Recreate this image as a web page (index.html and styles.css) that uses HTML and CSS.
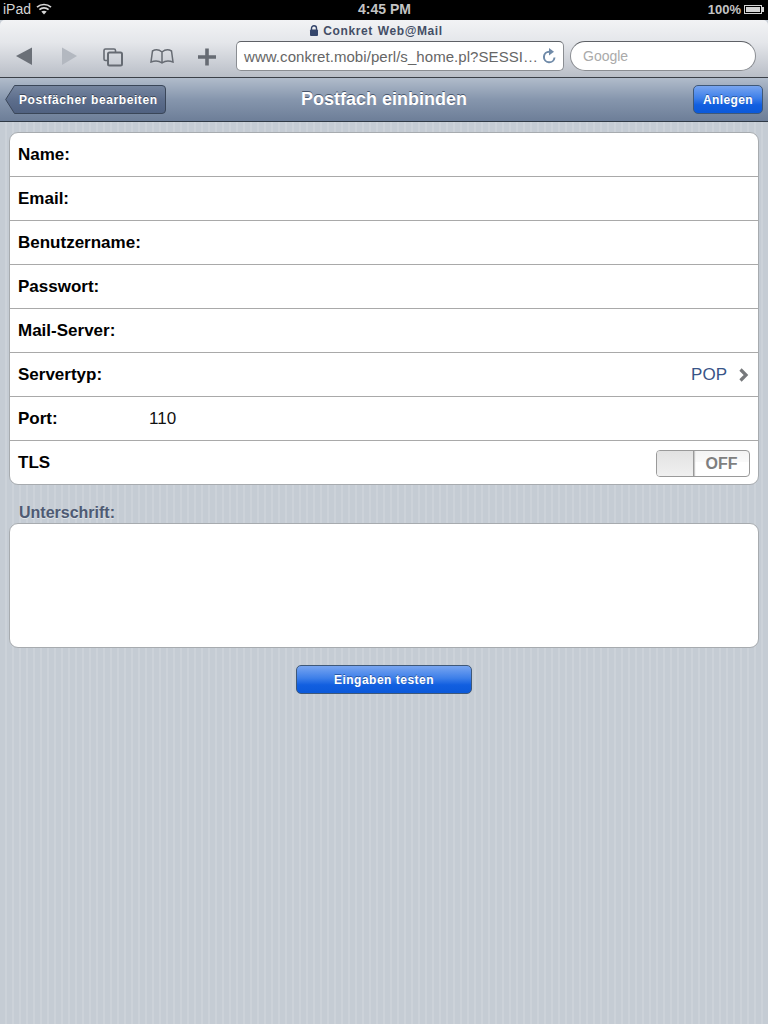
FILE: index.html
```html
<!DOCTYPE html>
<html lang="de">
<head>
    <meta charset="UTF-8">
    <title>Postfach einbinden</title>
    <link rel="stylesheet" href="styles.css">
</head>
<body>
    <!-- iPad status bar -->
    <div class="status-bar">
        <div class="status-left">
            <span>iPad</span>
            <svg class="wifi" width="16" height="12" viewBox="0 0 16 12">
                <path d="M1 4.2C5 .6 11 .6 15 4.2M3.4 6.6C6 4.3 10 4.3 12.6 6.6" fill="none" stroke="#d8d8d8" stroke-width="1.7"/>
                <path d="M5.3 8.6C7 7.3 9 7.3 10.7 8.6L8 11.4Z" fill="#d8d8d8"/>
            </svg>
        </div>
        <div class="status-time">4:45 PM</div>
        <div class="status-right">
            <span>100%</span>
            <span class="battery"><span class="battery-level"></span></span>
        </div>
    </div>

    <!-- Safari toolbar -->
    <div class="browser-bar">
        <div class="page-title">
            <svg width="10" height="11" viewBox="0 0 10 11">
                <path d="M2.5 5V3.3a2.5 2.5 0 0 1 5 0V5" fill="none" stroke="#34456b" stroke-width="1.4"/>
                <rect x="1" y="4.5" width="8" height="6.5" rx="1" fill="#34456b"/>
            </svg>
            <span>Conkret Web@Mail</span>
        </div>
        <div class="browser-row">
            <svg class="browser-icons" width="236" height="30" viewBox="0 0 236 30">
                <path d="M16 15L32 6.500V24Z" fill="#6b7078"/>
                <path d="M77 15L62 6.500V24Z" fill="#b3b8c0"/>
                <path d="M108 19.500H105.500A1.500 1.500 0 0 1 104 18V9.500A1.500 1.500 0 0 1 105.500 8H114A1.500 1.500 0 0 1 115.500 9.500V11" fill="none" stroke="#666b73" stroke-width="1.600"/>
                <rect x="108" y="11.500" width="14" height="13" rx="1.500" fill="none" stroke="#666b73" stroke-width="2"/>
                <path d="M162 11C159 8.500 155 8.500 152.500 10L151 21C154.500 19.800 159 19.800 162 22C165 19.800 169.500 19.800 173 21L171.500 10C169 8.500 165 8.500 162 11ZM162 11V22" fill="none" stroke="#666b73" stroke-width="1.500"/>
                <path d="M207 7.500V24.500M198 16H216" fill="none" stroke="#666b73" stroke-width="3.600"/>
            </svg>
            <div class="url-field">
                <span class="url-text">www.conkret.mobi/perl/s_home.pl?SESSI…</span>
                <svg width="15" height="16" viewBox="0 0 15 16">
                    <path d="M12.500 9.500A5.300 5.300 0 1 1 7.500 3.700" fill="none" stroke="#6f8aa8" stroke-width="2"/>
                    <path d="M7 0L12 3.800L7 7.500Z" fill="#6f8aa8"/>
                </svg>
            </div>
            <div class="search-field">Google</div>
        </div>
    </div>

    <!-- Page header -->
    <div class="nav-bar">
        <div class="nav-left">
            <div class="back-button">
                <svg class="back-shape" width="161" height="29" viewBox="0 0 161 29">
                    <defs>
                        <linearGradient id="backFill" x1="0" y1="0" x2="0" y2="1">
                            <stop offset="0" stop-color="#7686a0"/>
                            <stop offset="0.5" stop-color="#5d6e8c"/>
                            <stop offset="1" stop-color="#506180"/>
                        </linearGradient>
                    </defs>
                    <path d="M.700 14.500L9.500.500H157A3.500 3.500 0 0 1 160.500 4V25A3.500 3.500 0 0 1 157 28.500H9.500Z" fill="url(#backFill)" stroke="#3a4658"/>
                </svg>
                <span class="back-label">Postfächer bearbeiten</span>
            </div>
        </div>
        <h1 class="nav-title">Postfach einbinden</h1>
        <div class="nav-right">
            <div class="blue-button add-button">Anlegen</div>
        </div>
    </div>

    <div class="content">
        <div class="card">
            <div class="row"><span class="row-label">Name:</span></div>
            <div class="row"><span class="row-label">Email:</span></div>
            <div class="row"><span class="row-label">Benutzername:</span></div>
            <div class="row"><span class="row-label">Passwort:</span></div>
            <div class="row"><span class="row-label">Mail-Server:</span></div>
            <div class="row">
                <span class="row-label">Servertyp:</span>
                <span class="row-value">POP</span>
                <svg class="chevron" width="11" height="14" viewBox="0 0 11 14">
                    <path d="M2.500 1.500L8 7L2.500 12.500" fill="none" stroke="#77797c" stroke-width="3.200"/>
                </svg>
            </div>
            <div class="row"><span class="row-label port-label">Port:</span><span class="port-value">110</span></div>
            <div class="row row-last">
                <span class="row-label">TLS</span>
                <div class="toggle">
                    <div class="toggle-knob"></div>
                    <div class="toggle-text">OFF</div>
                </div>
            </div>
        </div>

        <div class="section-label">Unterschrift:</div>
        <div class="card signature-card"></div>

        <div class="test-wrap">
            <div class="blue-button test-button">Eingaben testen</div>
        </div>
    </div>
</body>
</html>
```

FILE: styles.css
```css
html, body {
    margin: 0;
    padding: 0;
}
body {
    width: 768px;
    height: 1024px;
    overflow: hidden;
    font-family: "Liberation Sans", Arial, sans-serif;
    background-color: #c5ccd4;
    background-image: linear-gradient(90deg, transparent 71%, rgba(255, 255, 255, 0.12) 71%);
    background-size: 7px 7px;
}
.status-bar {
    height: 20px;
    background: #000;
    color: #d4d4d4;
    font-size: 14px;
    display: grid;
    grid-template-columns: 1fr auto 1fr;
    align-items: center;
    padding: 0 4px 2px 3px;
    box-sizing: border-box;
}
.status-left {
    display: flex;
    align-items: center;
    gap: 5px;
}
.status-time {
    font-weight: bold;
    color: #c4c4c4;
    padding-left: 2px;
}
.status-right {
    display: flex;
    justify-content: flex-end;
    align-items: center;
    gap: 3px;
    font-weight: bold;
    color: #c4c4c4;
    font-size: 13px;
}
.battery {
    display: block;
    width: 18px;
    height: 9px;
    border: 1px solid #d4d4d4;
    padding: 1px;
    box-sizing: border-box;
    margin-right: 2px;
    position: relative;
}
.battery::after {
    content: "";
    position: absolute;
    right: -3px;
    top: 1px;
    width: 2px;
    height: 5px;
    background: #d4d4d4;
}
.battery-level {
    display: block;
    height: 100%;
    background: #d4d4d4;
}
.browser-bar {
    height: 58px;
    box-sizing: border-box;
    background: linear-gradient(#f2f3f5, #e4e6ea 40%, #b9bec7);
    border-bottom: 1px solid #3b4048;
    border-radius: 5px 5px 0 0;
    overflow: hidden;
}
.page-title {
    height: 21px;
    display: flex;
    justify-content: center;
    align-items: center;
    gap: 4px;
    padding-right: 16px;
    font-size: 12px;
    font-weight: bold;
    color: #444e66;
    letter-spacing: 0.6px;
    word-spacing: 1px;
}
.browser-row {
    display: flex;
    height: 30px;
}
.browser-icons {
    flex: none;
}
.url-field {
    width: 328px;
    height: 30px;
    box-sizing: border-box;
    background: #fff;
    border: 1px solid #8a8d92;
    border-top-color: #5e6166;
    border-radius: 5px;
    display: flex;
    align-items: center;
    justify-content: space-between;
    padding: 0 6px 0 7px;
    font-size: 15px;
    color: #666;
}
.url-text {
    white-space: nowrap;
    letter-spacing: 0.06px;
}
.search-field {
    width: 186px;
    height: 30px;
    box-sizing: border-box;
    margin-left: 6px;
    background: #fff;
    border: 1px solid #8a8d92;
    border-top-color: #5e6166;
    border-radius: 15px;
    padding: 0 12px;
    line-height: 28px;
    font-size: 14px;
    color: #aaa;
}
.nav-bar {
    height: 44px;
    box-sizing: border-box;
    background: linear-gradient(#b1bccb, #8696ad 50%, #6d7e98);
    border-bottom: 1px solid #2f3945;
    display: grid;
    grid-template-columns: 1fr auto 1fr;
    align-items: center;
    padding: 0 5px;
}
.nav-title {
    margin: 0;
    font-size: 18px;
    font-weight: bold;
    color: #fff;
    text-shadow: 0 -1px 0 #48566c;
}
.nav-right {
    display: flex;
    justify-content: flex-end;
}
.back-button {
    position: relative;
    width: 161px;
    height: 29px;
}
.back-shape {
    position: absolute;
    left: 0;
    top: 0;
}
.back-label {
    position: relative;
    display: block;
    padding-left: 14px;
    line-height: 30px;
    font-size: 12px;
    font-weight: bold;
    color: #fff;
    letter-spacing: 0.6px;
    white-space: nowrap;
    text-shadow: 0 -1px 0 #3c4758;
}
.blue-button {
    box-sizing: border-box;
    border: 1px solid #3f5878;
    border-radius: 5px;
    background: linear-gradient(#78a5f0, #3d7fe9 45%, #125fe0 70%, #0b59da);
    color: #fff;
    font-size: 12px;
    font-weight: bold;
    text-align: center;
    letter-spacing: 0.4px;
    text-shadow: 0 -1px 0 #2b5aa8;
}
.add-button {
    width: 70px;
    height: 29px;
    line-height: 28px;
}
.content {
    padding: 10px 9px 0 9px;
}
.card {
    background: #fff;
    border: 1px solid #a7abaf;
    border-radius: 9px;
}
.row {
    height: 44px;
    box-sizing: border-box;
    border-bottom: 1px solid #a9a9a9;
    display: flex;
    align-items: center;
    padding: 0 9px 0 8px;
}
.row-last {
    height: 43px;
    border-bottom: none;
}
.row-label {
    font-size: 17px;
    font-weight: bold;
    color: #000;
}
.port-label {
    width: 131px;
}
.port-value {
    font-size: 17px;
    color: #111;
}
.row-value {
    margin-left: auto;
    font-size: 17px;
    color: #385487;
}
.chevron {
    margin-left: 11px;
}
.toggle {
    margin: 1px -1px 0 auto;
    width: 94px;
    height: 27px;
    box-sizing: border-box;
    border: 1px solid #9a9a9a;
    border-radius: 4px;
    overflow: hidden;
    display: flex;
    background: linear-gradient(#f4f4f4, #fafafa 45%, #fff 45%);
}
.toggle-knob {
    width: 36px;
    background: linear-gradient(#e2e2e2, #f0f0f0);
    border-right: 1px solid #9a9a9a;
    box-shadow: 1px 0 1px #c8c8c8;
}
.toggle-text {
    flex: 1;
    text-align: center;
    line-height: 26px;
    font-size: 16px;
    font-weight: bold;
    color: #7f7f7f;
}
.section-label {
    height: 38px;
    box-sizing: border-box;
    padding: 19px 0 0 10px;
    line-height: 18px;
    font-size: 16px;
    font-weight: bold;
    color: #4e5a73;
    text-shadow: 0 1px 0 #dfe3e8;
}
.signature-card {
    height: 125px;
    box-sizing: border-box;
}
.test-wrap {
    display: flex;
    justify-content: center;
    padding-top: 17px;
}
.test-button {
    width: 176px;
    height: 29px;
    line-height: 28px;
    letter-spacing: 0.5px;
}
```
